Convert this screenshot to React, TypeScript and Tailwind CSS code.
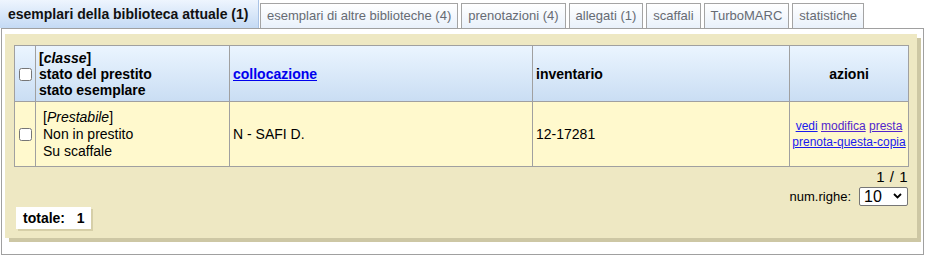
import React from 'react'

const tabs = [
  'esemplari di altre biblioteche (4)',
  'prenotazioni (4)',
  'allegati (1)',
  'scaffali',
  'TurboMARC',
  'statistiche',
]

const Check = () => (
  <input type="checkbox" className="m-0 h-[13px] w-[13px] align-middle" />
)

const App = () => {
  return (
    <div className="h-[256px] w-[925px] bg-white font-['Liberation_Sans',Arial,sans-serif] text-black">
      {/* tabs */}
      <div className="flex h-[28px] items-end">
        <div className="flex h-[28px] w-[259px] items-center border-r border-[#a9c3e6] bg-gradient-to-b from-[#eef5fe] to-[#c4daf4] pl-[8px] text-[14px] font-bold text-[#111]">
          esemplari della biblioteca attuale (1)
        </div>
        <div className="flex items-end gap-[3px] pl-px">
          {tabs.map(t => (
            <div
              key={t}
              className="flex h-[25px] items-center border border-b-0 border-[#a4a4a4] bg-gradient-to-b from-white to-[#e9f1fb] px-[6px] text-[13px] text-[#666b73]"
            >
              {t}
            </div>
          ))}
        </div>
      </div>

      {/* panel */}
      <div className="ml-px h-[227px] w-[923px] border border-[#a0a0a0] pt-[5px] pl-[3px]">
        <div className="flex h-[204px] w-[912px] flex-col bg-[#eee8c3] px-[9px] pt-[11px] shadow-[4px_4px_0_0_#cdc7a4]">
          <table className="w-[894px] table-fixed border-collapse border border-[#a0a0a0]">
            <colgroup>
              <col className="w-[21px]" />
              <col className="w-[194px]" />
              <col className="w-[303px]" />
              <col className="w-[257px]" />
              <col className="w-[119px]" />
            </colgroup>
            <thead>
              <tr className="h-[56px] bg-gradient-to-b from-[#ebf5ff] to-[#c9ddf3] text-[14px] font-bold leading-[16px]">
                <th className="border border-[#a0a0a0] p-0 text-center align-middle">
                  <Check />
                </th>
                <th className="border border-[#a0a0a0] px-[3px] text-left align-middle">
                  [<i>classe</i>]<br />
                  stato del prestito<br />
                  stato esemplare
                </th>
                <th className="border border-[#a0a0a0] px-[3px] text-left align-middle">
                  <a href="#" className="text-[#0000ee] underline">collocazione</a>
                </th>
                <th className="border border-[#a0a0a0] px-[3px] text-left align-middle">inventario</th>
                <th className="border border-[#a0a0a0] px-[3px] text-center align-middle">azioni</th>
              </tr>
            </thead>
            <tbody>
              <tr className="h-[65px] bg-[#fff9cd] text-[14px] leading-[17px]">
                <td className="border border-[#a0a0a0] p-0 text-center align-middle">
                  <Check />
                </td>
                <td className="border border-[#a0a0a0] pl-[7px] align-middle">
                  [<i>Prestabile</i>]<br />
                  Non in prestito<br />
                  Su scaffale
                </td>
                <td className="border border-[#a0a0a0] px-[3px] align-middle">N - SAFI D.</td>
                <td className="border border-[#a0a0a0] px-[3px] align-middle">12-17281</td>
                <td className="border border-[#a0a0a0] px-[2px] text-center align-middle text-[12px] leading-[16px]">
                  <a href="#" className="text-[#1a1aee] underline">vedi</a>{' '}
                  <a href="#" className="text-[#5226cc] underline">modifica</a>{' '}
                  <a href="#" className="text-[#5226cc] underline">presta</a>
                  <br />
                  <a href="#" className="text-[#1a1aee] underline">prenota-questa-copia</a>
                </td>
              </tr>
            </tbody>
          </table>

          <div className="flex flex-col items-end">
            <div className="mt-[2px] text-[15px] leading-[16px] tracking-[0.5px]">1 / 1</div>
            <div className="mt-[2px] flex items-center gap-[8px] text-[13px]">
              <span>num.righe:</span>
              <div className="relative h-[19px] w-[49px]">
                <select className="h-full w-full appearance-none rounded-[2px] border border-[#767676] bg-white pl-[4px] text-[16px] leading-[17px] text-black">
                  <option>10</option>
                </select>
                <svg
                  className="pointer-events-none absolute top-[6px] right-[6px]"
                  width="9"
                  height="6"
                  viewBox="0 0 9 6"
                >
                  <path d="M1 1l3.5 3.5L8 1" fill="none" stroke="#000" strokeWidth="1.8" />
                </svg>
              </div>
            </div>
          </div>

          <div className="mt-0 ml-[2px] w-fit bg-white px-[7px] text-[14px] leading-[22px] font-bold shadow-[2px_2px_0_0_#d6cfa8]">
            totale:&nbsp;&nbsp; 1
          </div>
        </div>
      </div>
    </div>
  )
}

export default App
